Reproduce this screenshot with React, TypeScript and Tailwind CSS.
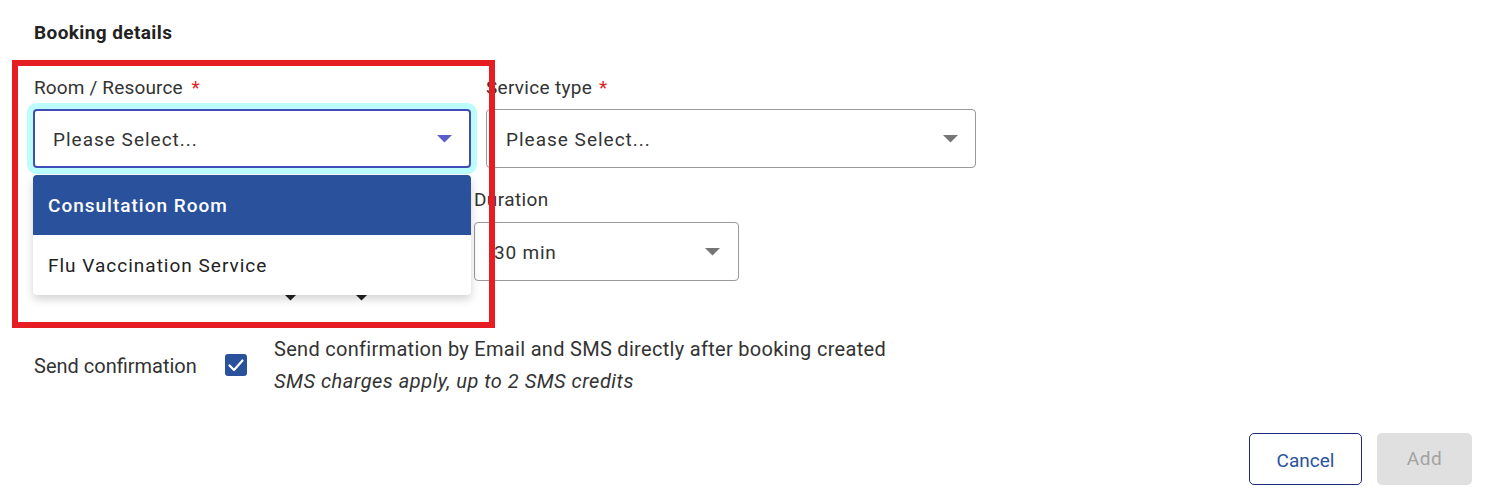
import React from "react";

const Caret = ({ color }: { color: string }) => (
  <svg width="15" height="8" viewBox="0 0 15 8" className="shrink-0">
    <path d="M0 0 L15 0 L7.5 7.5 Z" fill={color} />
  </svg>
);

export default function App() {
  return (
    <div
      className="relative w-[1490px] h-[498px] bg-white text-[#333333] overflow-hidden"
      style={{ fontFamily: "Roboto, 'Noto Sans', sans-serif" }}
    >
      <div className="pl-[33px] pr-[18px] pt-[21px]">
        <h2 className="pl-[1px] text-[19px] leading-[24px] tracking-[0.4px] font-bold text-[#222]">Booking details</h2>

        {/* Row 1 */}
        <div className="mt-[31px] flex gap-[15px]">
          <div className="w-[438px]">
            <div className="pl-[1px] text-[19px] leading-[24px] tracking-[0.15px] text-[#333]">
              Room / Resource <span className="ml-[4px] text-[#e02020]">*</span>
            </div>
            <div className="mt-[9px] h-[59px] rounded-[4px] border-2 border-[#3f4db8] ring-[6px] ring-[#bcfcfc] flex items-center justify-between pl-[18px] pr-[17px]">
              <span className="pt-[3px] text-[19px] tracking-[1px] text-[#333]">Please Select...</span>
              <Caret color="#5b5ec6" />
            </div>
          </div>
          <div className="w-[490px]">
            <div className="text-[19px] leading-[24px] tracking-[0.3px] text-[#333]">
              Service type <span className="ml-[2px] text-[#e02020]">*</span>
            </div>
            <div className="mt-[9px] h-[59px] rounded-[4px] border border-[#9a9a9a] flex items-center justify-between pl-[19px] pr-[17px]">
              <span className="pt-[3px] text-[19px] tracking-[1px] text-[#333]">Please Select...</span>
              <Caret color="#757575" />
            </div>
          </div>
        </div>

        {/* Row 2 */}
        <div className="mt-[20px] flex gap-[15px]">
          <div className="w-[426px] h-[112px] flex items-end pl-[250px] gap-[56px]">
            <svg width="15" height="8" viewBox="0 0 15 8" className="mb-[-2px]">
              <path d="M1 0 L14 0 L7.5 6.5 Z" fill="#222" />
            </svg>
            <svg width="15" height="8" viewBox="0 0 15 8" className="mb-[-2px]">
              <path d="M1 0 L14 0 L7.5 6.5 Z" fill="#222" />
            </svg>
          </div>
          <div className="w-[265px]">
            <div className="text-[19px] leading-[24px] tracking-[0.4px] text-[#333]">Duration</div>
            <div className="mt-[10px] h-[59px] rounded-[4px] border border-[#9a9a9a] flex items-center justify-between pl-[19px] pr-[18px]">
              <span className="pt-[3px] text-[19px] tracking-[0.8px] text-[#333]">30 min</span>
              <Caret color="#757575" />
            </div>
          </div>
        </div>

        {/* Send confirmation */}
        <div className="mt-[33px] flex items-center">
          <div className="w-[192px] pl-[1px] pt-[1px] text-[20px] leading-[28px] text-[#333]">Send confirmation</div>
          <div className="w-[22px] h-[22px] rounded-[3px] bg-[#2a529c] flex items-center justify-center">
            <svg width="22" height="22" viewBox="0 0 22 22">
              <path d="M4.5 11.5 L9 16 L17.5 6.5" stroke="white" strokeWidth="2.2" fill="none" strokeLinecap="round" strokeLinejoin="round" />
            </svg>
          </div>
          <div className="ml-[27px] text-[20px] leading-[32px] text-[#333]">
            <div className="tracking-[0.3px]">Send confirmation by Email and SMS directly after booking created</div>
            <div className="italic tracking-[0.5px]">SMS charges apply, up to 2 SMS credits</div>
          </div>
        </div>

        {/* Buttons */}
        <div className="mt-[36px] flex justify-end gap-[15px]">
          <button className="w-[113px] h-[52px] rounded-[5px] border border-[#1c2a7e] text-[#2a529c] text-[19px] pt-[4px] bg-white">
            Cancel
          </button>
          <button className="w-[95px] h-[52px] rounded-[5px] bg-[#e0e0e0] text-[#a3a3a3] text-[19px] tracking-[0.5px]">
            Add
          </button>
        </div>
      </div>

      {/* Dropdown menu */}
      <div className="absolute left-[33px] top-[175px] w-[438px] rounded-[4px] bg-white overflow-hidden shadow-[0_4px_10px_rgba(0,0,0,0.18)]">
        <div className="h-[60px] pt-[2px] bg-[#2a529c] text-white font-medium text-[19px] tracking-[1px] flex items-center pl-[15px]">
          Consultation Room
        </div>
        <div className="h-[60px] pt-[2px] text-[#222] text-[19px] tracking-[1px] flex items-center pl-[15px]">
          Flu Vaccination Service
        </div>
      </div>

      {/* Annotation rectangle */}
      <div className="absolute left-[12px] top-[60px] w-[483px] h-[268px] border-[6px] border-[#e61e24]" />
    </div>
  );
}
